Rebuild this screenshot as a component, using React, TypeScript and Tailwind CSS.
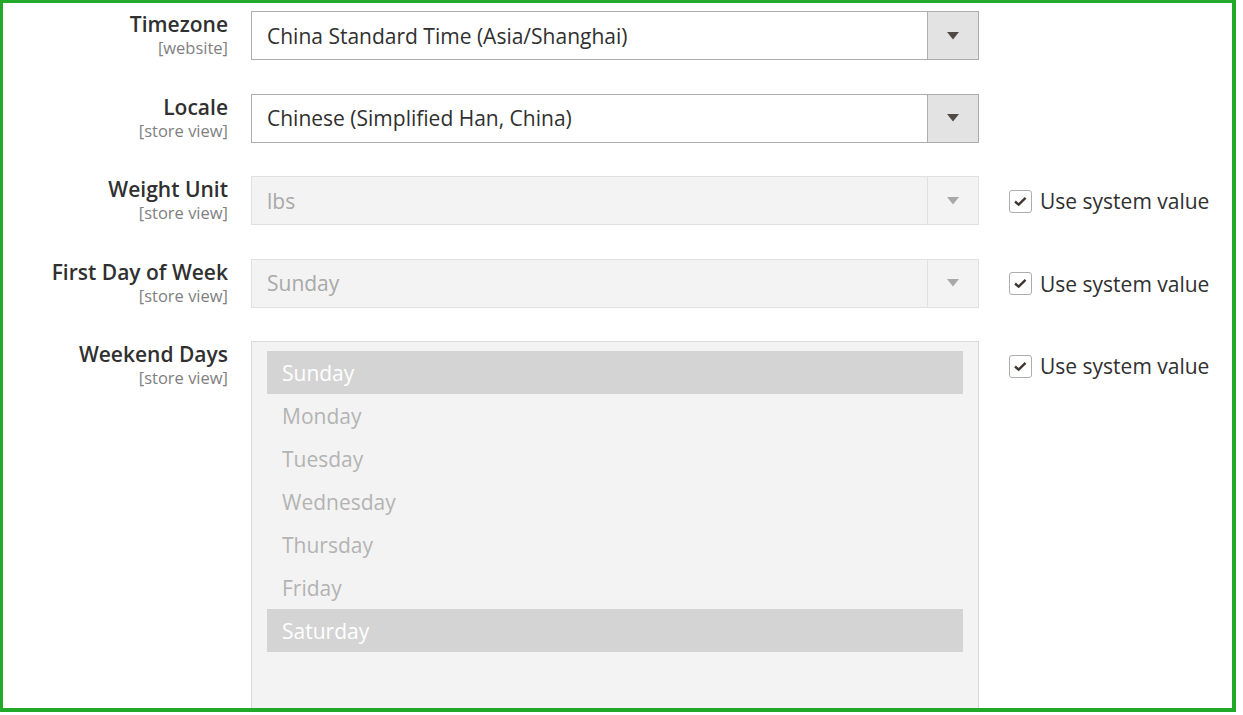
import React from 'react';

const font = { fontFamily: '"Open Sans", "Liberation Sans", sans-serif' };

const days = ['Sunday', 'Monday', 'Tuesday', 'Wednesday', 'Thursday', 'Friday', 'Saturday'];
const weekend = ['Sunday', 'Saturday'];

const Label = ({ title, scope }: { title: string; scope: string }) => (
  <div className="w-[225px] shrink-0 pt-[1px] text-right">
    <div className="text-[21px] leading-[25px] font-semibold text-[#303030]">{title}</div>
    <div className="mt-[2px] text-[16.5px] leading-[18px] text-[#808080]">{scope}</div>
  </div>
);

const Arrow = ({ color }: { color: string }) => (
  <svg width="12" height="8" viewBox="0 0 12 8">
    <path d="M0 0 H12 L6 7.5 Z" fill={color} />
  </svg>
);

const Select = ({ value, disabled }: { value: string; disabled?: boolean }) => (
  <div
    className={
      disabled
        ? 'ml-[23px] flex h-[49px] w-[728px] shrink-0 border border-[#e0e0e0] bg-[#f3f3f3]'
        : 'ml-[23px] flex h-[49px] w-[728px] shrink-0 border border-[#adadad] bg-white'
    }
  >
    <div
      className={
        disabled
          ? 'flex flex-1 items-center pl-[15px] pt-[2px] text-[21px] text-[#a9a9a9]'
          : 'flex flex-1 items-center pl-[15px] pt-[2px] text-[21px] text-[#303030]'
      }
    >
      {value}
    </div>
    <div
      className={
        disabled
          ? 'flex w-[51px] items-center justify-center border-l border-[#e0e0e0] bg-[#f3f3f3]'
          : 'flex w-[51px] items-center justify-center border-l border-[#adadad] bg-[#e3e3e3]'
      }
    >
      <Arrow color={disabled ? '#a8a8a8' : '#514943'} />
    </div>
  </div>
);

const UseSystem = () => (
  <div className="ml-[30px] flex items-center gap-[8px] pt-[11px] self-start">
    <div className="flex h-[23px] w-[23px] items-center justify-center rounded-[3px] border border-[#adadad] bg-white">
      <svg width="23" height="23" viewBox="0 0 23 23">
        <path d="M5.5 11.5 L9.5 15 L17 7.5" fill="none" stroke="#41362f" strokeWidth="2.6" />
      </svg>
    </div>
    <span className="text-[21px] leading-[28px] text-[#303030]">Use system value</span>
  </div>
);

export default function App() {
  return (
    <div className="bg-white w-[1243px] h-[715px]" style={font}>
      <div className="h-[712px] w-[1236px] overflow-hidden border-t-[3px] border-l-[3px] border-r-[4px] border-b-[4px] border-[#22a82a] bg-white">
        <div className="flex flex-col gap-[33.5px] pt-[8px]">
          <div className="flex">
            <Label title="Timezone" scope="[website]" />
            <Select value="China Standard Time (Asia/Shanghai)" />
          </div>
          <div className="flex">
            <Label title="Locale" scope="[store view]" />
            <Select value="Chinese (Simplified Han, China)" />
          </div>
          <div className="flex">
            <Label title="Weight Unit" scope="[store view]" />
            <Select value="lbs" disabled />
            <UseSystem />
          </div>
          <div className="flex">
            <Label title="First Day of Week" scope="[store view]" />
            <Select value="Sunday" disabled />
            <UseSystem />
          </div>
          <div className="flex">
            <Label title="Weekend Days" scope="[store view]" />
            <div className="ml-[23px] h-[420px] w-[728px] shrink-0 border border-[#d9d9d9] bg-[#f3f3f3] px-[15px] pt-[9px]">
              {days.map((d) =>
                weekend.includes(d) ? (
                  <div key={d} className="flex h-[43px] items-center bg-[#d4d4d4] pl-[15px] pt-[2px] text-[21px] text-white">
                    {d}
                  </div>
                ) : (
                  <div key={d} className="flex h-[43px] items-center pl-[15px] pt-[2px] text-[21px] text-[#b3b3b3]">
                    {d}
                  </div>
                )
              )}
            </div>
            <UseSystem />
          </div>
        </div>
      </div>
    </div>
  );
}
